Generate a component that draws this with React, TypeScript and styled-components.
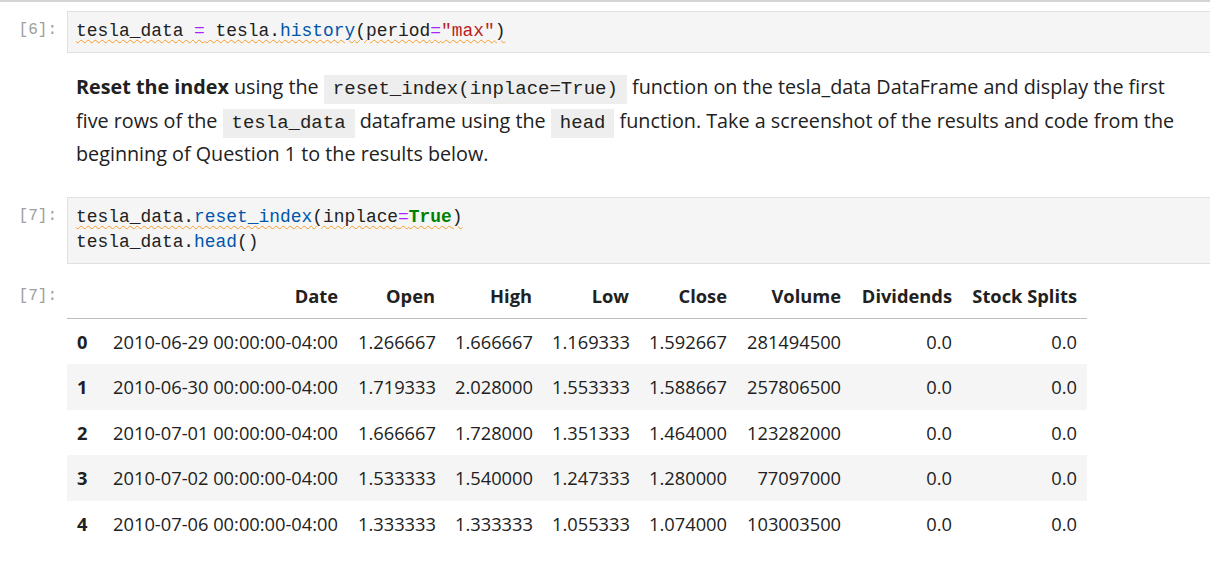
import React from "react";
import styled, { createGlobalStyle } from "styled-components";

const Global = createGlobalStyle`
  html, body { margin: 0; padding: 0; background: #fff; }
  body { font-family: "Open Sans", "Noto Sans", sans-serif; color: #212121; }
`;

const Page = styled.div`
  border-top: 2px solid #d4d4d4;
  padding-top: 9px;
  display: flex;
  flex-direction: column;
`;

const Cell = styled.div<{ $mt?: number }>`
  display: flex;
  align-items: flex-start;
  margin-top: ${(p) => p.$mt ?? 0}px;
`;

const Prompt = styled.div<{ $pt?: number }>`
  width: 67px;
  flex: none;
  box-sizing: border-box;
  padding-right: 10px;
  padding-top: ${(p) => p.$pt ?? 0}px;
  text-align: right;
  font-family: "Liberation Mono", monospace;
  font-size: 16px;
  line-height: 20px;
  color: #9e9e9e;
`;

const CodeBox = styled.div`
  flex: 1;
  background: #f5f5f5;
  border: 1px solid #e0e0e0;
  border-right: none;
  padding: 7px 8px 8px;
  font-family: "Liberation Mono", monospace;
  font-size: 17.9px;
  line-height: 25px;
  color: #212121;
  white-space: pre;
`;

const Line = styled.div<{ $squiggle?: boolean }>`
  height: 25px;
  span.sq {
    text-decoration: ${(p) => (p.$squiggle ? "underline wavy #f39c2a" : "none")};
    text-decoration-thickness: 1px;
    text-underline-offset: 3px;
  }
`;

const Op = styled.span`
  color: #aa22ff;
`;
const Prop = styled.span`
  color: #0055aa;
`;
const Str = styled.span`
  color: #ba2121;
`;
const Kw = styled.span`
  color: #008000;
  font-weight: bold;
`;

const Markdown = styled.div`
  padding: 17px 0 0 76px;
  font-size: 19.75px;
  line-height: 33.5px;
  color: #212121;
  white-space: nowrap;
  b { font-weight: 700; }
`;

const InlineCode = styled.code`
  font-family: "Liberation Mono", monospace;
  font-size: 19px;
  line-height: 1;
  background: #eeeeee;
  padding: 3px 9px 4px;
`;

const Output = styled.div`
  flex: none;
  width: 1020px;
`;

const Table = styled.table`
  border-collapse: collapse;
  table-layout: fixed;
  width: 1020px;
  font-size: 18.3px;
  color: #212121;
`;

const Th = styled.th`
  text-align: right;
  font-weight: 700;
  padding: 0 10px;
  height: 44px;
  vertical-align: middle;
  white-space: nowrap;
  border-bottom: 1px solid #bdbdbd;
`;

const Tr = styled.tr<{ $odd: boolean }>`
  background: ${(p) => (p.$odd ? "#f5f5f5" : "transparent")};
`;

const Td = styled.td<{ $head?: boolean }>`
  text-align: ${(p) => (p.$head ? "left" : "right")};
  font-weight: ${(p) => (p.$head ? 700 : 400)};
  padding: 0 10px;
  height: 45.5px;
  white-space: nowrap;
`;

const widths = [30, 251, 97, 97, 97, 98, 114, 111, 125];
const headers = ["", "Date", "Open", "High", "Low", "Close", "Volume", "Dividends", "Stock Splits"];
const rows = [
  ["2010-06-29 00:00:00-04:00", "1.266667", "1.666667", "1.169333", "1.592667", "281494500", "0.0", "0.0"],
  ["2010-06-30 00:00:00-04:00", "1.719333", "2.028000", "1.553333", "1.588667", "257806500", "0.0", "0.0"],
  ["2010-07-01 00:00:00-04:00", "1.666667", "1.728000", "1.351333", "1.464000", "123282000", "0.0", "0.0"],
  ["2010-07-02 00:00:00-04:00", "1.533333", "1.540000", "1.247333", "1.280000", "77097000", "0.0", "0.0"],
  ["2010-07-06 00:00:00-04:00", "1.333333", "1.333333", "1.055333", "1.074000", "103003500", "0.0", "0.0"],
];

export default function App() {
  return (
    <>
      <Global />
      <Page>
        <Cell>
          <Prompt $pt={9}>[6]:</Prompt>
          <CodeBox>
            <Line $squiggle>
              <span className="sq">
                tesla_data <Op>=</Op> tesla.<Prop>history</Prop>(period<Op>=</Op>
                <Str>"max"</Str>)
              </span>
            </Line>
          </CodeBox>
        </Cell>
        <Markdown>
          <b>Reset the index</b> using the <InlineCode>reset_index(inplace=True)</InlineCode> function on the
          tesla_data DataFrame and display the first
          <br />
          five rows of the <InlineCode>tesla_data</InlineCode> dataframe using the <InlineCode>head</InlineCode>{" "}
          function. Take a screenshot of the results and code from the
          <br />
          beginning of Question 1 to the results below.
        </Markdown>
        <Cell $mt={26}>
          <Prompt $pt={9}>[7]:</Prompt>
          <CodeBox>
            <Line $squiggle>
              <span className="sq">
                tesla_data.<Prop>reset_index</Prop>(inplace<Op>=</Op>
                <Kw>True</Kw>)
              </span>
            </Line>
            <Line>
              tesla_data.<Prop>head</Prop>()
            </Line>
          </CodeBox>
        </Cell>
        <Cell $mt={10}>
          <Prompt $pt={12}>[7]:</Prompt>
          <Output>
            <Table>
              <colgroup>
                {widths.map((w, i) => (
                  <col key={i} style={{ width: w }} />
                ))}
              </colgroup>
              <thead>
                <tr>
                  {headers.map((h, i) => (
                    <Th key={i}>{h}</Th>
                  ))}
                </tr>
              </thead>
              <tbody>
                {rows.map((r, i) => (
                  <Tr key={i} $odd={i % 2 === 1}>
                    <Td $head>{i}</Td>
                    {r.map((c, j) => (
                      <Td key={j}>{c}</Td>
                    ))}
                  </Tr>
                ))}
              </tbody>
            </Table>
          </Output>
        </Cell>
      </Page>
    </>
  );
}
